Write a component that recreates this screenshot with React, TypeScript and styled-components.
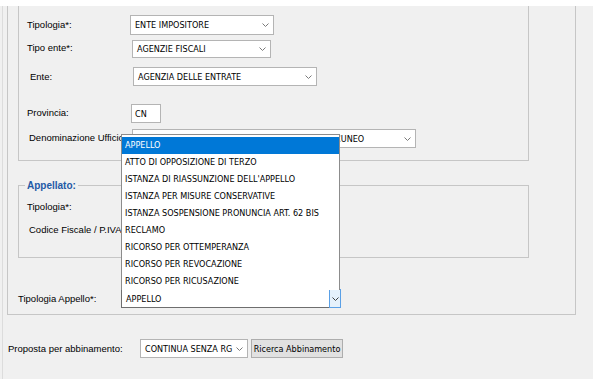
import React from "react";
import styled, { createGlobalStyle } from "styled-components";

const GlobalStyle = createGlobalStyle`
  html, body { margin: 0; padding: 0; background: #ffffff; }
  body { font-family: "Liberation Sans", Arial, sans-serif; }
  * { box-sizing: border-box; }
`;

const Screen = styled.div`
  width: 593px;
  height: 384px;
  overflow: hidden;
  background: #ffffff;
  display: flex;
  flex-direction: column;
`;

const TopStrip = styled.div`
  height: 6px;
  flex: none;
  background: #ffffff;
`;

const Panel = styled.div`
  height: 373px;
  flex: none;
  background: #f0f0f0;
  padding-left: 2px;
`;

const Frame = styled.div`
  height: 100%;
  border-left: 1px solid #dcdcdc;
  padding-left: 4px;
  display: flex;
  flex-direction: column;
`;

const OuterGroup = styled.div`
  width: 569px;
  height: 309px;
  flex: none;
  border: 1px solid #c6c6c6;
  border-top: none;
  padding-left: 10px;
  display: flex;
  flex-direction: column;
`;

const Group = styled.div<{ $h: number; $mt?: number; $open?: boolean }>`
  position: relative;
  width: 511px;
  height: ${(p) => p.$h}px;
  margin-top: ${(p) => p.$mt ?? 0}px;
  flex: none;
  border: 1px solid #c6c6c6;
  ${(p) => (p.$open ? "border-top: none;" : "")}
  display: flex;
  flex-direction: column;
`;

const Legend = styled.span`
  position: absolute;
  top: -7px;
  left: 6px;
  padding: 0 2px;
  background: #f0f0f0;
  color: #1f5aa6;
  font-weight: bold;
  font-size: 10px;
  line-height: 13px;
`;

const Row = styled.div<{ $mt: number; $h: number }>`
  display: flex;
  align-items: center;
  flex: none;
  margin-top: ${(p) => p.$mt}px;
  height: ${(p) => p.$h}px;
`;

const Label = styled.span<{ $indent: number; $w: number; $up?: number }>`
  flex: none;
  margin-left: ${(p) => p.$indent}px;
  width: ${(p) => p.$w}px;
  margin-bottom: ${(p) => (p.$up ?? 0) * 2}px;
  font-size: 9.5px;
  line-height: 12px;
  color: #000000;
  white-space: nowrap;
  overflow: visible;
`;

const controlFont = `
  font-family: "DejaVu Sans Condensed", "DejaVu Sans", Tahoma, sans-serif;
  font-size: 9px;
  color: #000000;
`;

const Combo = styled.div<{ $w: number; $h: number; $focused?: boolean }>`
  position: relative;
  flex: none;
  width: ${(p) => p.$w}px;
  height: ${(p) => p.$h}px;
  background: #ffffff;
  border: 1px solid ${(p) => (p.$focused ? "#6e6e6e" : "#b4b4b4")};
  display: flex;
  align-items: center;
  ${controlFont}
`;

const ComboText = styled.span<{ $fit?: boolean }>`
  flex: 1;
  min-width: 0;
  padding-left: 4px;
  white-space: nowrap;
  overflow: ${(p) => (p.$fit ? "visible" : "hidden")};
`;

const ComboButton = styled.span<{ $focused?: boolean }>`
  flex: none;
  width: ${(p) => (p.$focused ? 12 : 16)}px;
  align-self: stretch;
  display: flex;
  align-items: center;
  justify-content: center;
  ${(p) =>
    p.$focused
      ? "background: #e5f1fb; border: 1px solid #5aa0e6; margin: -1px -1px -1px 0;"
      : ""}
`;

const TextBox = styled.div<{ $w: number; $h: number }>`
  flex: none;
  width: ${(p) => p.$w}px;
  height: ${(p) => p.$h}px;
  background: #ffffff;
  border: 1px solid #b4b4b4;
  display: flex;
  align-items: center;
  padding-left: 3px;
  ${controlFont}
`;

const Button = styled.button`
  flex: none;
  margin-left: 3px;
  width: 92px;
  height: 19px;
  padding: 0;
  background: #e1e1e1;
  border: 1px solid #adadad;
  border-radius: 0;
  ${controlFont}
`;

const Popup = styled.ul`
  position: absolute;
  left: -1px;
  bottom: 100%;
  width: 219px;
  margin: 0;
  padding: 2px 0 0 0;
  list-style: none;
  background: #ffffff;
  border: 1px solid #8c8c8c;
  border-bottom: none;
  z-index: 5;
`;

const PopupItem = styled.li<{ $selected?: boolean }>`
  height: 17px;
  line-height: 17px;
  padding-left: 3px;
  white-space: nowrap;
  background: ${(p) => (p.$selected ? "#0078d7" : "#ffffff")};
  color: ${(p) => (p.$selected ? "#ffffff" : "#000000")};
`;

const Chevron = ({ color = "#7a7a7a" }: { color?: string }) => (
  <svg width="7" height="4" viewBox="0 0 7 4">
    <polyline points="0.5,0.5 3.5,3.5 6.5,0.5" fill="none" stroke={color} strokeWidth="1" />
  </svg>
);

const appealTypes = [
  "APPELLO",
  "ATTO DI OPPOSIZIONE DI TERZO",
  "ISTANZA DI RIASSUNZIONE DELL'APPELLO",
  "ISTANZA PER MISURE CONSERVATIVE",
  "ISTANZA SOSPENSIONE PRONUNCIA ART. 62 BIS",
  "RECLAMO",
  "RICORSO PER OTTEMPERANZA",
  "RICORSO PER REVOCAZIONE",
  "RICORSO PER RICUSAZIONE",
];

export default function App() {
  return (
    <>
      <GlobalStyle />
      <Screen>
        <TopStrip />
        <Panel>
          <Frame>
            <OuterGroup>
              <Group $h={155} $open>
                <Row $mt={9} $h={20}>
                  <Label $indent={8} $w={103}>Tipologia*:</Label>
                  <Combo $w={144} $h={20}>
                    <ComboText>ENTE IMPOSITORE</ComboText>
                    <ComboButton><Chevron /></ComboButton>
                  </Combo>
                </Row>
                <Row $mt={5} $h={18}>
                  <Label $indent={8} $w={105} $up={1}>Tipo ente*:</Label>
                  <Combo $w={139} $h={18}>
                    <ComboText>AGENZIE FISCALI</ComboText>
                    <ComboButton><Chevron /></ComboButton>
                  </Combo>
                </Row>
                <Row $mt={9} $h={19}>
                  <Label $indent={11} $w={103}>Ente:</Label>
                  <Combo $w={184} $h={19}>
                    <ComboText>AGENZIA DELLE ENTRATE</ComboText>
                    <ComboButton><Chevron /></ComboButton>
                  </Combo>
                </Row>
                <Row $mt={18} $h={19}>
                  <Label $indent={8} $w={104} $up={1}>Provincia:</Label>
                  <TextBox $w={30} $h={19}>CN</TextBox>
                </Row>
                <Row $mt={6} $h={19}>
                  <Label $indent={10} $w={103} $up={1}>Denominazione Ufficio:</Label>
                  <Combo $w={284} $h={19}>
                    <ComboText>DIREZIONE PROVINCIALE DI CUNEO - UFFICIO DI CUNEO</ComboText>
                    <ComboButton><Chevron /></ComboButton>
                  </Combo>
                </Row>
              </Group>

              <Group $h={73} $mt={24}>
                <Legend>Appellato:</Legend>
                <Row $mt={12} $h={18}>
                  <Label $indent={8} $w={100}>Tipologia*:</Label>
                </Row>
                <Row $mt={5} $h={18}>
                  <Label $indent={10} $w={100}>Codice Fiscale / P.IVA:</Label>
                </Row>
              </Group>

              <Row $mt={31} $h={19}>
                <Label $indent={0} $w={103}>Tipologia Appello*:</Label>
                <Combo $w={220} $h={19} $focused>
                  <Popup>
                    {appealTypes.map((t, i) => (
                      <PopupItem key={t} $selected={i === 0}>{t}</PopupItem>
                    ))}
                  </Popup>
                  <ComboText>APPELLO</ComboText>
                  <ComboButton $focused><Chevron color="#404040" /></ComboButton>
                </Combo>
              </Row>
            </OuterGroup>

            <Row $mt={24} $h={19}>
              <Label $indent={1} $w={132}>Proposta per abbinamento:</Label>
              <Combo $w={108} $h={19}>
                <ComboText $fit>CONTINUA SENZA RG</ComboText>
                <ComboButton><Chevron /></ComboButton>
              </Combo>
              <Button>Ricerca Abbinamento</Button>
            </Row>
          </Frame>
        </Panel>
      </Screen>
    </>
  );
}
